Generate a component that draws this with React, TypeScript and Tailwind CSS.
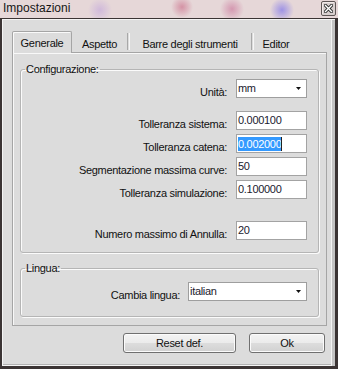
import React from "react";

const Arrow = () => (
  <svg width="5" height="3" viewBox="0 0 5 3" className="block">
    <polygon points="0,0 5,0 2.5,3" fill="#111" />
  </svg>
);

function Combo({ value, w }: { value: string; w: string }) {
  return (
    <div className={`${w} h-[19px] bg-white border border-[#9e9e9e] flex items-center justify-between pl-[1px] pr-[5px]`}>
      <span className="leading-[13px] text-[#1a1a2e]">{value}</span>
      <Arrow />
    </div>
  );
}

function Field({ value, selected }: { value: string; selected?: boolean }) {
  return (
    <div className="w-[71px] h-[19px] bg-white border border-[#a3a3a3] flex items-center pl-[1px]">
      {selected ? (
        <>
          <span className="leading-[14px] bg-[#3399ff] text-white">{value}</span>
          <span className="w-px h-[14px] bg-[#222]" />
        </>
      ) : (
        <span className="leading-[13px] text-[#1a1a2e]">{value}</span>
      )}
    </div>
  );
}

function Row({ label, children, mt }: { label: string; children: React.ReactNode; mt: string }) {
  return (
    <div className={`h-[19px] flex justify-end items-start pr-[11px] ${mt}`}>
      <span className="mt-[7px] mr-[9px] leading-[12px] text-[#111]">{label}</span>
      {children}
    </div>
  );
}

export default function App() {
  return (
    <div className="w-[338px] h-[369px] overflow-hidden font-['Liberation_Sans',Arial,sans-serif] text-[11px] tracking-[-0.3px] text-[#111]">
      <div className="h-[18px] flex items-start justify-between pl-[3px] bg-[#e6d7d8] bg-[radial-gradient(circle_at_100px_10px,rgba(190,160,220,0.55),transparent_12px),radial-gradient(circle_at_182px_7px,rgba(200,100,130,0.6),transparent_11px),radial-gradient(circle_at_232px_9px,rgba(200,110,150,0.6),transparent_12px),radial-gradient(circle_at_282px_10px,rgba(120,110,235,0.65),transparent_12px)]">
        <span className="text-[12px] tracking-normal leading-[14px] mt-[1px] text-[#161616]">Impostazioni</span>
        <div className="mt-[1px] mr-[2px] w-[15px] h-[15px] border border-[#5e5656] rounded-[2px] bg-[#d8cfcf] flex items-center justify-center shadow-[inset_1px_1px_0_#f2eaea]">
          <svg width="9" height="9" viewBox="0 0 9 9">
            <path d="M1.5 1.5 L7.5 7.5 M7.5 1.5 L1.5 7.5" stroke="#333" strokeWidth="3.2" strokeLinecap="square" />
            <path d="M1.5 1.5 L7.5 7.5 M7.5 1.5 L1.5 7.5" stroke="#fff" strokeWidth="1.4" strokeLinecap="square" />
          </svg>
        </div>
      </div>

      <div className="h-[351px] border-t border-l-2 border-r-[3px] border-b-[3px] border-[#3b3434] bg-[#dcdcdc] shadow-[inset_1px_1px_0_#f4f4f4,inset_-3px_0_0_#c4c4c4,inset_-4px_0_0_#f4f4f4,inset_0_-1px_0_#f4f4f4,inset_0_-2px_0_#b2b2b2]">
        <div className="ml-[10px] mt-[12px] w-[315px]">
          <div className="flex items-end h-[21px]">
            <div className="relative z-10 w-[60px] h-[22px] -mb-px border border-b-0 border-[#a5a5a5] rounded-t-[2px] bg-[#dcdcdc] flex justify-center pt-[5px] leading-[13px] shadow-[inset_1px_1px_0_#fafafa]">
              Generale
            </div>
            <div className="w-[55px] h-[21px] flex justify-center pt-[7px] leading-[13px]">Aspetto</div>
            <div className="self-start mt-[2px] w-[2px] h-[17px] border-l border-[#a8a8a8] shadow-[1px_0_0_#f6f6f6]" />
            <div className="w-[122px] h-[21px] flex justify-center pt-[7px] leading-[13px]">Barre degli strumenti</div>
            <div className="self-start mt-[2px] w-[2px] h-[17px] border-l border-[#a8a8a8] shadow-[1px_0_0_#f6f6f6]" />
            <div className="w-[46px] h-[21px] flex justify-center pt-[7px] leading-[13px]">Editor</div>
          </div>

          <div className="h-[274px] border border-[#a5a5a5] shadow-[inset_1px_1px_0_#f8f8f8] px-[7px] pt-[10px]">
            <fieldset className="w-[299px] border border-[#b5b5b5] rounded-[3px] shadow-[inset_1px_1px_0_#fbfbfb,1px_1px_0_#fbfbfb] pb-[12px]">
              <legend className="ml-[4px] px-[1px] leading-[13px]">Configurazione:</legend>
              <Row label="Unità:" mt="mt-[3px]">
                <Combo value="mm" w="w-[71px]" />
              </Row>
              <Row label="Tolleranza sistema:" mt="mt-[13px]">
                <Field value="0.000100" />
              </Row>
              <Row label="Tolleranza catena:" mt="mt-[4px]">
                <Field value="0.002000" selected />
              </Row>
              <Row label="Segmentazione massima curve:" mt="mt-[4px]">
                <Field value="50" />
              </Row>
              <Row label="Tolleranza simulazione:" mt="mt-[4px]">
                <Field value="0.100000" />
              </Row>
              <Row label="Numero massimo di Annulla:" mt="mt-[22px]">
                <Field value="20" />
              </Row>
            </fieldset>

            <fieldset className="mt-[9px] w-[299px] border border-[#b5b5b5] rounded-[3px] shadow-[inset_1px_1px_0_#fbfbfb,1px_1px_0_#fbfbfb] pb-[15px]">
              <legend className="ml-[4px] px-[1px] leading-[13px]">Lingua:</legend>
              <div className="h-[19px] flex justify-end items-start pr-[11px] mt-[7px]">
                <span className="mt-[7px] mr-[8px] leading-[12px]">Cambia lingua:</span>
                <Combo value="italian" w="w-[119px]" />
              </div>
            </fieldset>
          </div>

          <div className="mt-[7px] flex justify-end gap-[13px] pr-[2px]">
            <div className="w-[113px] h-[20px] border border-[#707070] rounded-[3px] bg-[linear-gradient(#f3f3f3,#ebebeb_50%,#dddddd_50%,#d1d1d1)] shadow-[inset_0_0_0_1px_#fbfbfb] flex items-center justify-center leading-[13px]">
              Reset def.
            </div>
            <div className="w-[76px] h-[20px] border border-[#707070] rounded-[3px] bg-[linear-gradient(#f3f3f3,#ebebeb_50%,#dddddd_50%,#d1d1d1)] shadow-[inset_0_0_0_1px_#fbfbfb] flex items-center justify-center leading-[13px]">
              Ok
            </div>
          </div>
        </div>
      </div>
    </div>
  );
}
